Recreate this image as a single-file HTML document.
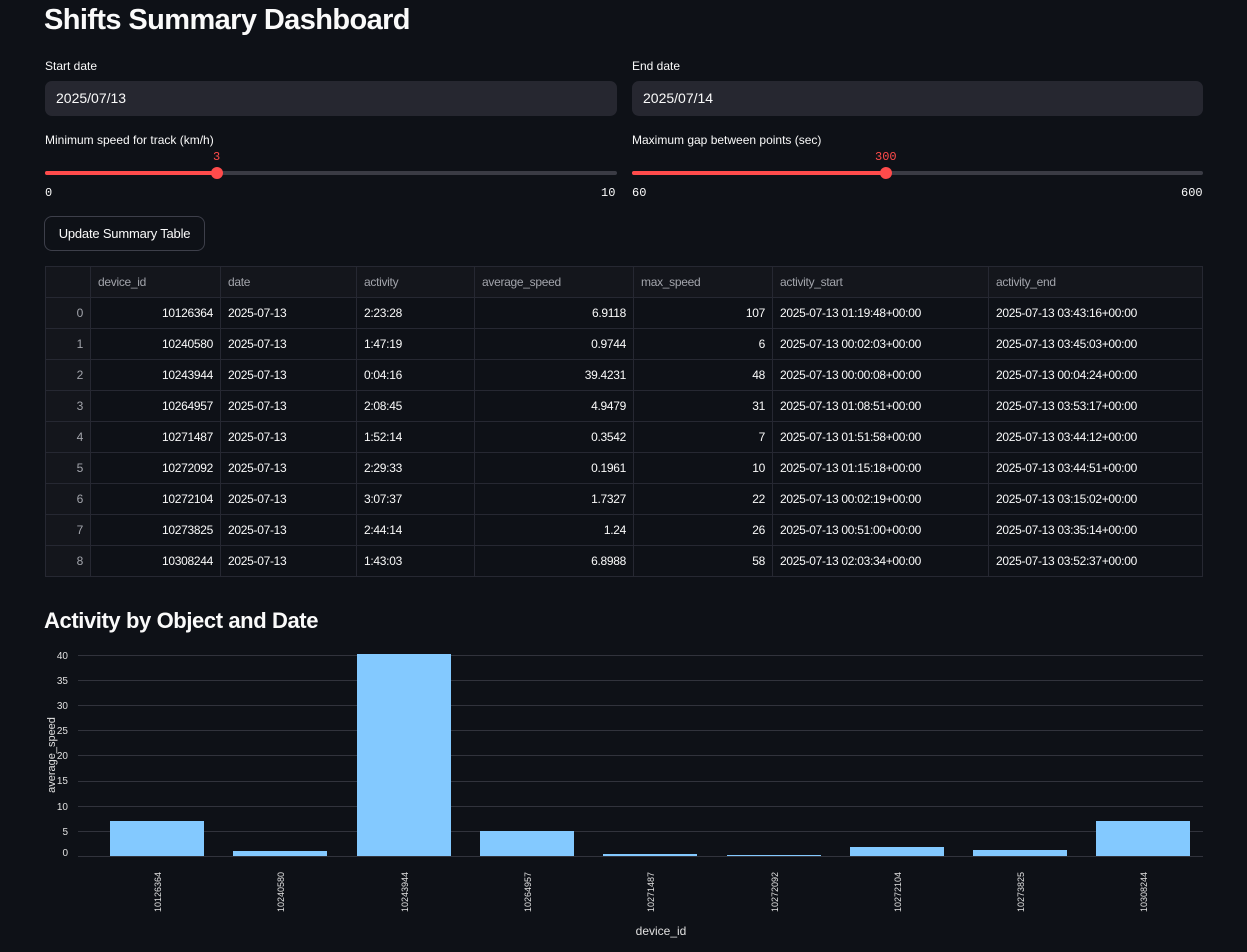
<!DOCTYPE html><html><head><meta charset="utf-8"><style>
body{margin:0;background:#0e1117;width:1247px;height:952px;overflow:hidden;font-family:"Liberation Sans",sans-serif;color:#fafafa;position:relative}
.a{position:absolute;white-space:nowrap}
h1{position:absolute;left:44px;top:4px;margin:0;font-size:29px;font-weight:bold;letter-spacing:-0.6px}
.lbl{font-size:12px}
.inp{position:absolute;height:35px;background:#262730;border-radius:7px;font-size:14px;line-height:35px;padding-left:11px;box-sizing:border-box}
.mono{font-family:"Liberation Mono",monospace;font-size:12px}
.track{position:absolute;height:4px;background:#3a3b44;border-radius:2px}
.fill{position:absolute;height:4px;background:#ff4b4b;border-radius:2px}
.th{position:absolute;width:12px;height:12px;border-radius:50%;background:#ff4b4b}
.btn{position:absolute;left:44px;top:216px;width:161px;height:35px;border:1px solid #3d3f4a;border-radius:8px;box-sizing:border-box;font-size:13px;line-height:33px;text-align:center;letter-spacing:-0.2px}
table{position:absolute;left:45px;top:266px;width:1158px;border-collapse:collapse;font-size:12px}
td,th{border:1px solid #262832;height:30px;padding:0 7px;font-weight:normal;text-align:left;white-space:nowrap;letter-spacing:-0.3px}
th{color:#a2a4ab;height:30px;background:#14161c}
td.r{text-align:right}
td.i{color:#a2a4ab;text-align:right;background:#14161c}
h2{position:absolute;left:44px;top:608px;margin:0;font-size:22px;font-weight:bold;letter-spacing:-0.4px}
</style></head><body>
<h1>Shifts Summary Dashboard</h1>
<div class="a lbl" style="left:45px;top:59px">Start date</div>
<div class="a lbl" style="left:632px;top:59px">End date</div>
<div class="inp" style="left:45px;top:81px;width:572px">2025/07/13</div>
<div class="inp" style="left:632px;top:81px;width:571px">2025/07/14</div>
<div class="a lbl" style="left:45px;top:133px">Minimum speed for track (km/h)</div>
<div class="a lbl" style="left:632px;top:133px">Maximum gap between points (sec)</div>
<div class="track" style="left:45px;top:171px;width:572px"></div>
<div class="fill" style="left:45px;top:171px;width:172px"></div>
<div class="th" style="left:211px;top:167px"></div>
<div class="a mono" style="left:213px;top:150px;color:#ff4b4b">3</div>
<div class="a mono" style="left:45px;top:186px">0</div>
<div class="a mono" style="left:601px;top:186px">10</div>
<div class="track" style="left:632px;top:171px;width:571px"></div>
<div class="fill" style="left:632px;top:171px;width:254px"></div>
<div class="th" style="left:880px;top:167px"></div>
<div class="a mono" style="left:875px;top:150px;color:#ff4b4b">300</div>
<div class="a mono" style="left:632px;top:186px">60</div>
<div class="a mono" style="left:1181px;top:186px">600</div>
<div class="btn">Update Summary Table</div>
<table>
<tr><th style="width:30px"></th><th style="width:115px">device_id</th><th style="width:121px">date</th><th style="width:103px">activity</th><th style="width:144px">average_speed</th><th style="width:124px">max_speed</th><th style="width:201px">activity_start</th><th>activity_end</th></tr>
<tr><td class="i">0</td><td class="r">10126364</td><td>2025-07-13</td><td>2:23:28</td><td class="r">6.9118</td><td class="r">107</td><td>2025-07-13 01:19:48+00:00</td><td>2025-07-13 03:43:16+00:00</td></tr>
<tr><td class="i">1</td><td class="r">10240580</td><td>2025-07-13</td><td>1:47:19</td><td class="r">0.9744</td><td class="r">6</td><td>2025-07-13 00:02:03+00:00</td><td>2025-07-13 03:45:03+00:00</td></tr>
<tr><td class="i">2</td><td class="r">10243944</td><td>2025-07-13</td><td>0:04:16</td><td class="r">39.4231</td><td class="r">48</td><td>2025-07-13 00:00:08+00:00</td><td>2025-07-13 00:04:24+00:00</td></tr>
<tr><td class="i">3</td><td class="r">10264957</td><td>2025-07-13</td><td>2:08:45</td><td class="r">4.9479</td><td class="r">31</td><td>2025-07-13 01:08:51+00:00</td><td>2025-07-13 03:53:17+00:00</td></tr>
<tr><td class="i">4</td><td class="r">10271487</td><td>2025-07-13</td><td>1:52:14</td><td class="r">0.3542</td><td class="r">7</td><td>2025-07-13 01:51:58+00:00</td><td>2025-07-13 03:44:12+00:00</td></tr>
<tr><td class="i">5</td><td class="r">10272092</td><td>2025-07-13</td><td>2:29:33</td><td class="r">0.1961</td><td class="r">10</td><td>2025-07-13 01:15:18+00:00</td><td>2025-07-13 03:44:51+00:00</td></tr>
<tr><td class="i">6</td><td class="r">10272104</td><td>2025-07-13</td><td>3:07:37</td><td class="r">1.7327</td><td class="r">22</td><td>2025-07-13 00:02:19+00:00</td><td>2025-07-13 03:15:02+00:00</td></tr>
<tr><td class="i">7</td><td class="r">10273825</td><td>2025-07-13</td><td>2:44:14</td><td class="r">1.24</td><td class="r">26</td><td>2025-07-13 00:51:00+00:00</td><td>2025-07-13 03:35:14+00:00</td></tr>
<tr><td class="i">8</td><td class="r">10308244</td><td>2025-07-13</td><td>1:43:03</td><td class="r">6.8988</td><td class="r">58</td><td>2025-07-13 02:03:34+00:00</td><td>2025-07-13 03:52:37+00:00</td></tr>
</table>
<h2>Activity by Object and Date</h2>
<svg class="a" style="left:0;top:0" width="1247" height="952" font-family="Liberation Sans, sans-serif" font-size="10">
<g stroke="#31333c" stroke-width="1">
<line x1="78" x2="1203" y1="655.5" y2="655.5"/><line x1="78" x2="1203" y1="680.5" y2="680.5"/><line x1="78" x2="1203" y1="705.5" y2="705.5"/><line x1="78" x2="1203" y1="730.5" y2="730.5"/><line x1="78" x2="1203" y1="755.5" y2="755.5"/><line x1="78" x2="1203" y1="781.5" y2="781.5"/><line x1="78" x2="1203" y1="806.5" y2="806.5"/><line x1="78" x2="1203" y1="831.5" y2="831.5"/><line x1="78" x2="1203" y1="856.5" y2="856.5"/>
</g>
<g fill="#e0e0e0" text-anchor="end">
<text x="68" y="659">40</text><text x="68" y="684">35</text><text x="68" y="709">30</text><text x="68" y="734">25</text><text x="68" y="759">20</text><text x="68" y="784">15</text><text x="68" y="810">10</text><text x="68" y="835">5</text><text x="68" y="856">0</text>
</g>
<g fill="#83c9ff">
<rect x="110" y="821" width="94" height="35"/><rect x="233" y="851" width="94" height="5"/><rect x="357" y="654" width="94" height="202"/><rect x="480" y="831" width="94" height="25"/><rect x="603" y="854" width="94" height="2"/><rect x="727" y="855" width="94" height="1"/><rect x="850" y="847" width="94" height="9"/><rect x="973" y="850" width="94" height="6"/><rect x="1096" y="821" width="94" height="35"/>
</g>
<g fill="#e0e0e0" font-size="9">
<text transform="translate(161,912) rotate(-90)">10126364</text><text transform="translate(284,912) rotate(-90)">10240580</text><text transform="translate(408,912) rotate(-90)">10243944</text><text transform="translate(531,912) rotate(-90)">10264957</text><text transform="translate(654,912) rotate(-90)">10271487</text><text transform="translate(778,912) rotate(-90)">10272092</text><text transform="translate(901,912) rotate(-90)">10272104</text><text transform="translate(1024,912) rotate(-90)">10273825</text><text transform="translate(1147,912) rotate(-90)">10308244</text>
</g>
<text x="661" y="935" fill="#e0e0e0" font-size="12" text-anchor="middle">device_id</text>
<text transform="translate(55,755) rotate(-90)" fill="#e0e0e0" font-size="11" text-anchor="middle">average_speed</text>
</svg>
</body></html>
